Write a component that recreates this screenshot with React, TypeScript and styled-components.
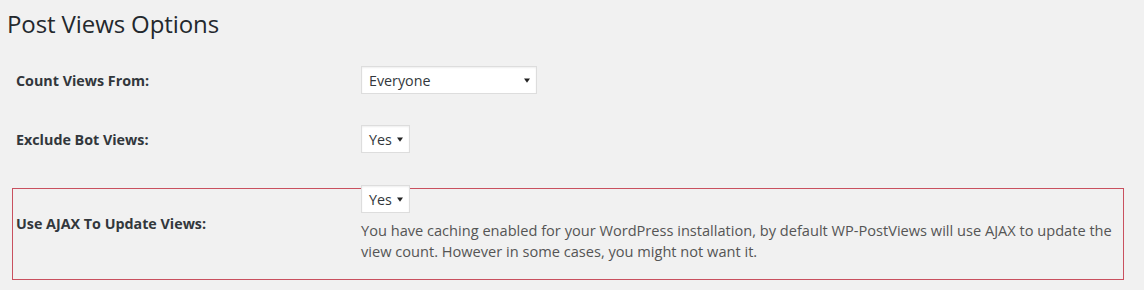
import styled, { createGlobalStyle } from 'styled-components';

const GlobalStyle = createGlobalStyle`
	html, body {
		margin: 0;
		padding: 0;
		background: #f1f1f1;
	}
	body {
		font-family: 'Open Sans', 'Noto Sans', sans-serif;
		color: #23282d;
	}
`;

const Page = styled.div`
	width: 1144px;
	height: 290px;
	padding: 9px 20px 0 0;
	box-sizing: border-box;
	overflow: hidden;
`;

const Title = styled.h1`
	margin: 0 0 12px 7px;
	font-size: 24px;
	line-height: 30px;
	font-weight: 400;
	color: #23282d;
	letter-spacing: -0.1px;
`;

const Form = styled.div`
	display: flex;
	flex-direction: column;
	margin-left: 12px;
`;

const Row = styled.div<{ $highlight?: boolean; $top: number }>`
	display: grid;
	grid-template-columns: 345px 1fr;
	align-items: ${(p) => (p.$highlight ? 'start' : 'center')};
	height: ${(p) => (p.$highlight ? 'auto' : '58px')};
	box-sizing: border-box;
	margin-top: ${(p) => p.$top}px;
	padding: ${(p) => (p.$highlight ? '0 10px 17px 3px' : '0 10px 0 3px')};
	border: 1px solid ${(p) => (p.$highlight ? '#c9505f' : 'transparent')};
`;

const Label = styled.div<{ $top?: number }>`
	font-size: 14.3px;
	font-weight: 700;
	line-height: 18px;
	color: #32373c;
	padding-top: ${(p) => p.$top ?? 1}px;
`;

const Field = styled.div<{ $pull?: boolean }>`
	display: flex;
	flex-direction: column;
	align-items: flex-start;
	margin-top: ${(p) => (p.$pull ? '-4px' : '0')};
`;

const Select = styled.div<{ $width: number }>`
	display: flex;
	align-items: center;
	justify-content: space-between;
	width: ${(p) => p.$width}px;
	height: 28px;
	box-sizing: border-box;
	padding: 2px 6px 0 7px;
	background: #fff;
	border: 1px solid #ddd;
	box-shadow: inset 0 1px 2px rgba(0, 0, 0, 0.07);
	font-size: 14.3px;
	line-height: 18px;
	color: #32373c;
`;

const Arrow = styled.svg`
	display: block;
	width: 6px;
	height: 5px;
	flex: none;
	margin-top: -2px;
`;

const Description = styled.p`
	margin: 7px 0 0;
	font-size: 14.6px;
	line-height: 21px;
	color: #555;
	max-width: 756px;
`;

const Dropdown = ({ value, width }: { value: string; width: number }) => (
	<Select $width={width}>
		<span>{value}</span>
		<Arrow viewBox='0 0 6 5'>
			<path d='M0 0.5h6L3 4.8z' fill='#222' />
		</Arrow>
	</Select>
);

const App = () => {
	return (
		<Page>
			<GlobalStyle />
			<Title>Post Views Options</Title>
			<Form>
				<Row $top={0}>
					<Label>Count Views From:</Label>
					<Field>
						<Dropdown value='Everyone' width={176} />
					</Field>
				</Row>
				<Row $top={1}>
					<Label>Exclude Bot Views:</Label>
					<Field>
						<Dropdown value='Yes' width={49} />
					</Field>
				</Row>
				<Row $highlight $top={20}>
					<Label $top={26}>Use AJAX To Update Views:</Label>
					<Field $pull>
						<Dropdown value='Yes' width={49} />
						<Description>
							You have caching enabled for your WordPress installation, by
							default WP-PostViews will use AJAX to update the view count.
							However in some cases, you might not want it.
						</Description>
					</Field>
				</Row>
			</Form>
		</Page>
	);
};

export default App;
